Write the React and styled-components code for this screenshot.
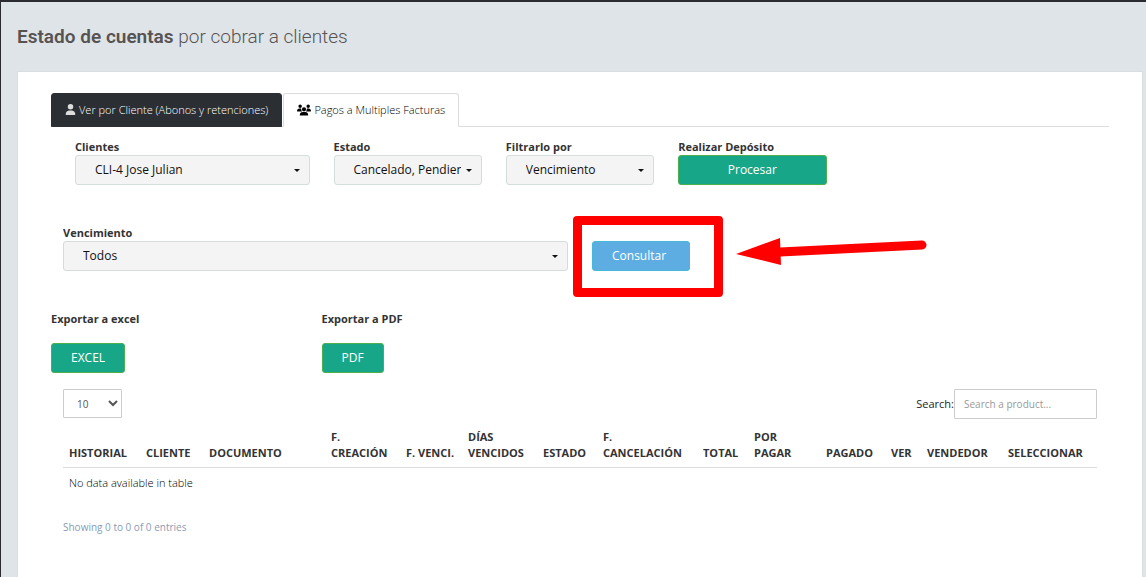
import React from "react";
import styled, { createGlobalStyle } from "styled-components";
import { FaUser, FaUsers } from "react-icons/fa6";

const columns = [
  { label: "Historial", width: 77 },
  { label: "Cliente", width: 63 },
  { label: "Documento", width: 122 },
  { label: "F.\nCreación", width: 75 },
  { label: "F. Venci.", width: 62 },
  { label: "Días\nVencidos", width: 75 },
  { label: "Estado", width: 60 },
  { label: "F.\nCancelación", width: 100 },
  { label: "Total", width: 51 },
  { label: "Por\nPagar", width: 72 },
  { label: "Pagado", width: 65 },
  { label: "Ver", width: 36 },
  { label: "Vendedor", width: 81 },
  { label: "Seleccionar", width: 95 }
];

const GlobalStyle = createGlobalStyle`
  * {
    box-sizing: border-box;
  }

  body {
    margin: 0;
    background: #dfe4e8;
    color: #212529;
    font-family: "Open Sans", sans-serif;
    font-size: 11px;
    line-height: 16px;
  }

  button,
  input,
  select {
    font-family: inherit;
  }
`;

const Page = styled.div`
  display: flex;
  flex-direction: column;
  min-height: 100vh;
  padding: 22px 3px 0 16px;
  border-top: 2px solid #2b2c31;
  border-left: 1px solid #2b2c31;
`;

const Title = styled.h1`
  margin: 0 0 22px;
  color: #575352;
  font-family: Roboto, sans-serif;
  font-size: 19px;
  font-weight: 300;
  line-height: 25px;

  strong {
    font-weight: 600;
  }
`;

const Panel = styled.main`
  flex: 1;
  padding: 21px 33px;
  border: 1px solid #d9dde0;
  border-bottom: 0;
  background: #fff;
`;

const Tabs = styled.nav`
  display: flex;
  gap: 1px;
  border-bottom: 1px solid #dcdcdc;
`;

const Tab = styled.button`
  display: flex;
  align-items: center;
  gap: 3px;
  height: 34px;
  margin-bottom: -1px;
  padding: 0 13px 1px;
  border: 1px solid ${({ $dark }) => ($dark ? "#2b2e33" : "#dcdcdc")};
  border-bottom-color: ${({ $dark }) => ($dark ? "#2b2e33" : "#fff")};
  border-radius: 3px 3px 0 0;
  background: ${({ $dark }) => ($dark ? "#2b2e33" : "#fff")};
  color: ${({ $dark }) => ($dark ? "#fff" : "#000")};
  font-size: 11px;
  font-weight: 300;
`;

const Filters = styled.div`
  display: grid;
  grid-template-columns: repeat(12, 1fr);
  column-gap: 24px;
  align-items: end;
  margin-top: 12px;
  padding: 0 24px;
`;

const DueFilter = styled.div`
  display: grid;
  grid-template-columns: 1fr 1fr;
  column-gap: 24px;
  align-items: end;
  margin-top: 40px;
  padding: 0 12px;
`;

const Exports = styled.div`
  display: grid;
  grid-template-columns: repeat(4, 1fr);
  column-gap: 24px;
  margin-top: 40px;
`;

const Field = styled.div`
  display: flex;
  flex-direction: column;
  align-items: ${({ $start }) => ($start ? "flex-start" : "stretch")};
  gap: ${({ $start }) => ($start ? "16px" : "0")};
  grid-column: span ${({ $span = 1 }) => $span};
  min-width: 0;
`;

const Label = styled.label`
  color: #333;
  font-size: 11px;
  font-weight: 700;
`;

const SelectBox = styled.div`
  position: relative;

  &::after {
    content: "";
    position: absolute;
    top: 14px;
    right: 10px;
    border: 3px solid transparent;
    border-top-color: #111;
    border-bottom: 0;
    pointer-events: none;
  }
`;

const Picker = styled.select`
  display: block;
  width: 100%;
  height: 30px;
  padding: 0 20px 1px 19px;
  border: 1px solid #d3dedc;
  border-radius: 3px;
  appearance: none;
  background: #f4f4f4;
  color: #111;
  font-size: 12px;
`;

const Button = styled.button`
  height: 30px;
  padding: ${({ $info }) => ($info ? "0 23px 2px 19px" : "0 19px 2px")};
  border: 1px solid ${({ $info }) => ($info ? "#46b8da" : "#4cae4c")};
  border-radius: 3px;
  background: ${({ $info }) => ($info ? "#5dade2" : "#18a689")};
  color: #fff;
  font-size: 12px;
`;

const Highlighted = styled.div`
  position: relative;
  justify-self: start;
`;

const HighlightFrame = styled.div`
  position: absolute;
  inset: -25px -33px -26px -19px;
  border: 9px solid #f00;
  border-radius: 4px;
  pointer-events: none;
`;

const Arrow = styled.svg`
  position: absolute;
  top: -5px;
  left: 144px;
  pointer-events: none;
`;

const TableArea = styled.section`
  margin-top: 16px;
  padding: 0 12px;
`;

const TableTools = styled.div`
  display: flex;
  justify-content: space-between;
  align-items: flex-start;
`;

const PageSize = styled.select`
  width: 59px;
  height: 29px;
  padding: 0 0 0 9px;
  border: 1px solid #ccc;
  border-radius: 1px;
  background: #fff;
  color: #555;
  font-size: 10px;
`;

const Search = styled.label`
  display: flex;
  align-items: center;
`;

const SearchInput = styled.input`
  width: 143px;
  height: 30px;
  padding: 0 9px;
  border: 1px solid #ccc;
  border-radius: 1px;
  color: #555;
  font-size: 10px;

  &::placeholder {
    color: #999;
  }
`;

const Table = styled.table`
  width: 100%;
  margin-top: 10px;
  border-collapse: collapse;
  table-layout: fixed;

  th {
    padding: 0 0 6px 6px;
    border-bottom: 1px solid #dcdcdc;
    color: #333;
    font-weight: 700;
    text-align: left;
    text-transform: uppercase;
    vertical-align: bottom;
    white-space: pre-line;
  }

  td {
    padding: 7px 6px;
    color: #000;
    font-weight: 300;
  }
`;

const TableInfo = styled.p`
  margin: 21px 0 0;
  color: #8a9bb5;
  font-size: 10px;
`;

const SelectField = ({ id, label, value, span }) => (
  <Field $span={span}>
    <Label htmlFor={id}>{label}</Label>
    <SelectBox>
      <Picker id={id}>
        <option>{value}</option>
      </Picker>
    </SelectBox>
  </Field>
);

const App = () => (
  <>
    <GlobalStyle />
    <Page>
      <Title>
        <strong>Estado de cuentas</strong> por cobrar a clientes
      </Title>
      <Panel>
        <Tabs>
          <Tab type="button" $dark>
            <FaUser size={11} color="#ddd" />
            Ver por Cliente (Abonos y retenciones)
          </Tab>
          <Tab type="button">
            <FaUsers size={14} />
            Pagos a Multiples Facturas
          </Tab>
        </Tabs>

        <Filters>
          <SelectField id="clientes" label="Clientes" value="CLI-4 Jose Julian" span={3} />
          <SelectField id="estado" label="Estado" value="Cancelado, Pendiente" span={2} />
          <SelectField id="filtro" label="Filtrarlo por" value="Vencimiento" span={2} />
          <Field $span={2}>
            <Label htmlFor="procesar">Realizar Depósito</Label>
            <Button id="procesar" type="button">Procesar</Button>
          </Field>
        </Filters>

        <DueFilter>
          <SelectField id="vencimiento" label="Vencimiento" value="Todos" />
          <Highlighted>
            <Button type="button" $info>Consultar</Button>
            <HighlightFrame />
            <Arrow width="192" height="32" viewBox="0 0 192 32" aria-hidden="true">
              <path d="M44 16 L186 9" stroke="#f00" strokeWidth="9" strokeLinecap="round" />
              <path d="M0 18 L44 2 L45 29 Z" fill="#f00" />
            </Arrow>
          </Highlighted>
        </DueFilter>

        <Exports>
          <Field $start>
            <Label htmlFor="excel">Exportar a excel</Label>
            <Button id="excel" type="button">EXCEL</Button>
          </Field>
          <Field $start>
            <Label htmlFor="pdf">Exportar a PDF</Label>
            <Button id="pdf" type="button">PDF</Button>
          </Field>
        </Exports>

        <TableArea>
          <TableTools>
            <PageSize aria-label="entries">
              <option>10</option>
            </PageSize>
            <Search>
              Search:
              <SearchInput type="search" placeholder="Search a product..." />
            </Search>
          </TableTools>
          <Table>
            <colgroup>
              {columns.map(({ label, width }) => (
                <col key={label} width={width} />
              ))}
            </colgroup>
            <thead>
              <tr>
                {columns.map(({ label }) => (
                  <th key={label}>{label}</th>
                ))}
              </tr>
            </thead>
            <tbody>
              <tr>
                <td colSpan={columns.length}>No data available in table</td>
              </tr>
            </tbody>
          </Table>
          <TableInfo>Showing 0 to 0 of 0 entries</TableInfo>
        </TableArea>
      </Panel>
    </Page>
  </>
);

export default App;
